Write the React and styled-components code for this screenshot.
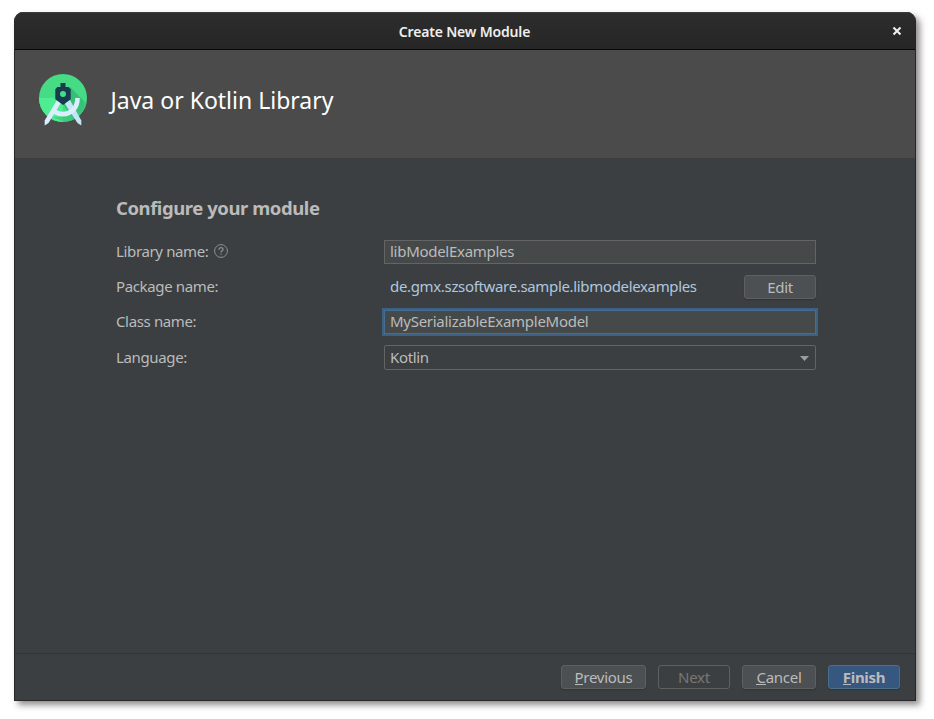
import React from "react";
import styled, { createGlobalStyle } from "styled-components";

const GlobalStyle = createGlobalStyle`
  * { box-sizing: border-box; }
  body { margin: 0; background: #fff; font-family: "Noto Sans", "Open Sans", sans-serif; }
`;

const Page = styled.div`
  height: 719px;
  padding: 12px 18px 18px 14px;
  overflow: hidden;
`;

const Window = styled.section`
  display: flex;
  flex-direction: column;
  width: 902px;
  height: 689px;
  border: 1px solid #262728;
  border-top: 0;
  border-radius: 9px 9px 0 0;
  background: #3c3f41;
  color: #bbb;
  overflow: hidden;
  box-shadow: 4px 4px 6px rgba(40, 30, 30, 0.5);
`;

const TitleBar = styled.header`
  display: grid;
  grid-template-columns: 36px 1fr 36px;
  align-items: center;
  height: 38px;
  border-bottom: 1px solid #070707;
  background: linear-gradient(#2d2d2d, #262626);
  box-shadow: inset 0 1px #3b3b3b;
`;

const WindowTitle = styled.h1`
  grid-column: 2;
  margin: 0;
  padding: 3px 1px 0 0;
  text-align: center;
  color: #eeeeec;
  font-size: 14px;
  font-weight: 600;
  line-height: 20px;
  letter-spacing: -0.18px;
`;

const CloseButton = styled.button`
  display: flex;
  justify-content: center;
  padding: 0;
  border: 0;
  background: none;
  color: #eeeeec;
`;

const Banner = styled.div`
  display: flex;
  align-items: center;
  gap: 23.5px;
  height: 108px;
  padding: 0 0 8px 24px;
  background: #4b4b4b;
`;

const BannerTitle = styled.h2`
  margin: 0;
  color: #fff;
  font-size: 23px;
  font-weight: 400;
  line-height: 32px;
`;

const Content = styled.main`
  flex: 1;
  padding: 37px 99px 0 101px;
`;

const SectionTitle = styled.h3`
  margin: 0 0 18px;
  font-size: 18.5px;
  font-weight: 700;
  line-height: 26px;
  letter-spacing: -0.44px;
`;

const Form = styled.div`
  display: grid;
  grid-template-columns: 268px 432px;
  grid-template-rows: 25px 25px 25px 26px;
  row-gap: 10px;
`;

const Label = styled.label`
  display: flex;
  align-items: center;
  gap: 5px;
  padding-bottom: 2px;
  font-size: 15px;
  line-height: 24px;
  letter-spacing: -0.36px;

  &:last-of-type {
    padding-bottom: 0;
  }
`;

const Input = styled.input`
  align-self: end;
  width: 432px;
  height: 24px;
  padding: 0 5px 2px;
  border: 1px solid ${(p) => (p.$focused ? "#466d94" : "#646464")};
  outline: ${(p) => (p.$focused ? "2px solid #3d6185" : "none")};
  outline-offset: 0;
  background: #45494a;
  color: #bbb;
  font: 15px "Noto Sans", sans-serif;
  letter-spacing: -0.28px;
`;

const PackageRow = styled.div`
  display: flex;
  align-items: center;
  justify-content: space-between;
  padding-left: 6px;
`;

const PackageName = styled.span`
  padding-bottom: 1px;
  color: #afc7df;
  font-size: 15px;
  line-height: 24px;
  letter-spacing: -0.34px;
`;

const Select = styled.div`
  display: flex;
  align-items: center;
  justify-content: space-between;
  height: 25px;
  margin-top: 1px;
  padding: 0 6px 2px 5px;
  border: 1px solid #646464;
  border-radius: 2px;
  font-size: 15px;
  letter-spacing: -0.34px;
`;

const Footer = styled.footer`
  display: flex;
  justify-content: flex-end;
  gap: 12px;
  height: 47px;
  padding: 11px 15px 0 0;
  border-top: 1px solid #323435;
`;

const Button = styled.button`
  width: ${(p) => p.$width}px;
  height: 24px;
  padding: 0;
  border: 1px solid ${(p) => (p.$primary ? "#4c708c" : "#5e6060")};
  border-radius: 3px;
  background: ${(p) => (p.$primary ? "#365880" : p.disabled ? "transparent" : "#4c5052")};
  box-shadow: ${(p) => (p.disabled ? "none" : "0 1px 1px rgba(30, 30, 30, 0.35)")};
  color: ${(p) => (p.disabled ? "#777" : "#bbb")};
  font: ${(p) => (p.$primary ? 700 : 400)} 15px/22px "Noto Sans", sans-serif;
  letter-spacing: -0.28px;
`;

const Mnemonic = styled.span`
  display: inline-block;
  height: 19px;
  line-height: 22px;
  border-bottom: 1px solid currentColor;
  vertical-align: top;
`;

const StudioLogo = () => (
  <svg width="48" height="52" viewBox="0 0 48 52" aria-hidden="true">
    <defs>
      <clipPath id="disc"><circle cx="24" cy="24" r="24" /></clipPath>
      <linearGradient id="shade" x1="0" y1="0" x2="1" y2="1">
        <stop offset="0" stopColor="#269a67" />
        <stop offset="1" stopColor="#3dcf7d" />
      </linearGradient>
    </defs>
    <circle cx="24" cy="24" r="24" fill="#46dc85" />
    <g clipPath="url(#disc)">
      <path d="M0 24h24v24H0z" fill="#4eed91" />
      <path d="M31 13L48 30V48H36L24 30z" fill="url(#shade)" opacity=".65" />
      <path d="M14 43Q36 44 43 24L46 33L30 50z" fill="#35bd75" opacity=".55" />
    </g>
    <path d="M27 27L31 26L42.3 46.5V51.5L38.5 49L26 30z" fill="#c4e4f7" />
    <path d="M18 26L22.5 28L9.5 49L5.7 51.5V46.5z" fill="#dceefe" />
    <path d="M14.5 37.4Q26 43.5 34.5 35.5Q38.5 31.5 38.5 24" fill="none" stroke="#dceefe" strokeWidth="4.6" />
    <path fill="#173c4d" fillRule="evenodd" d="M21.5 9h5v4h3.2l2 2.2v10L24 31l-7.7-5.8v-10l2-2.2h3.2zM24 17.1a3 3 0 100 6 3 3 0 000-6z" />
  </svg>
);

const CloseIcon = () => (
  <svg width="10" height="10" viewBox="0 0 10 10" aria-hidden="true">
    <path d="M1.5 1.5l7 7M8.5 1.5l-7 7" stroke="currentColor" strokeWidth="2.1" />
  </svg>
);

const HelpIcon = () => (
  <svg width="14" height="14" viewBox="0 0 14 14" fill="none" stroke="#8b9194" aria-hidden="true">
    <circle cx="7" cy="7" r="6.4" />
    <path d="M5 5.7C5 4.4 5.8 3.7 7 3.7s2 .7 2 1.7C9 6.7 7 6.8 7 8.5M7 9.5v1.2" strokeWidth="1.2" />
  </svg>
);

const Triangle = styled.svg`
  margin-top: 4px;
`;

const Arrow = () => (
  <Triangle width="9" height="5" viewBox="0 0 9 5" aria-hidden="true">
    <path d="M0 0h9L4.5 5z" fill="#9a9da0" />
  </Triangle>
);

export default function App() {
  return (
    <Page>
      <GlobalStyle />
      <Window>
        <TitleBar>
          <WindowTitle>Create New Module</WindowTitle>
          <CloseButton aria-label="Close"><CloseIcon /></CloseButton>
        </TitleBar>
        <Banner>
          <StudioLogo />
          <BannerTitle>Java or Kotlin Library</BannerTitle>
        </Banner>
        <Content>
          <SectionTitle>Configure your module</SectionTitle>
          <Form>
            <Label>Library name: <HelpIcon /></Label>
            <Input defaultValue="libModelExamples" spellCheck={false} />
            <Label>Package name:</Label>
            <PackageRow>
              <PackageName>de.gmx.szsoftware.sample.libmodelexamples</PackageName>
              <Button $width={72}>Edit</Button>
            </PackageRow>
            <Label>Class name:</Label>
            <Input $focused defaultValue="MySerializableExampleModel" spellCheck={false} />
            <Label>Language:</Label>
            <Select>Kotlin<Arrow /></Select>
          </Form>
        </Content>
        <Footer>
          <Button $width={85}><Mnemonic>P</Mnemonic>revious</Button>
          <Button $width={72} disabled>Next</Button>
          <Button $width={74}><Mnemonic>C</Mnemonic>ancel</Button>
          <Button $width={72} $primary><Mnemonic>F</Mnemonic>inish</Button>
        </Footer>
      </Window>
    </Page>
  );
}
